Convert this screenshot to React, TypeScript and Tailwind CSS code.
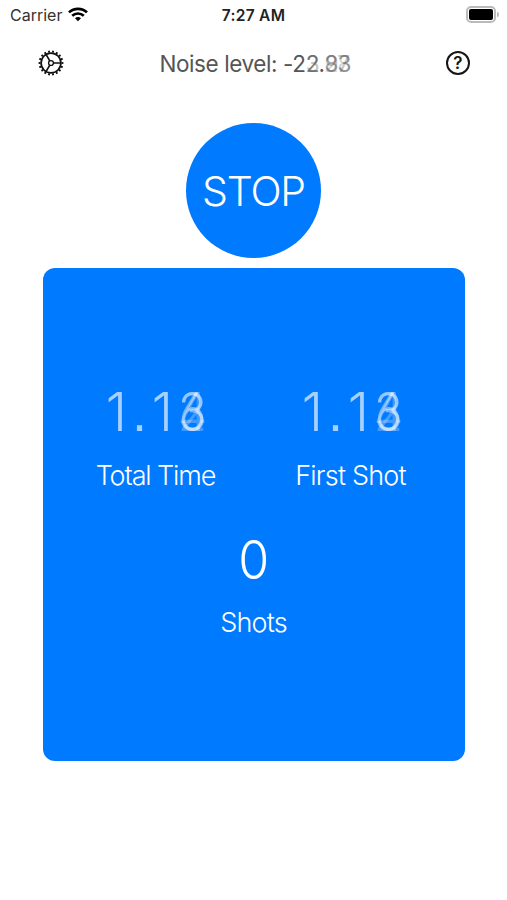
const BlendedDigits = ({ layers }: { layers: string[] }) => {
  return (
    <span className="relative block w-[29px] h-[56px] [font-feature-settings:'cv03','cv04']">
      {layers.map((digit, i) => (
        <span
          key={digit}
          className={`absolute inset-0 flex justify-center scale-x-[0.87] ${i < 2 ? "opacity-45" : "opacity-25"}`}
        >
          {digit}
        </span>
      ))}
    </span>
  );
};

const Timer = ({ label, labelClass }: { label: string; labelClass: string }) => {
  return (
    <div className="flex flex-col items-center">
      <div className="flex h-[56px] pr-[3px] text-[54px] leading-[56px] font-light text-white">
        <span className="w-[31px] text-center opacity-65">1</span>
        <span className="w-[15px] text-center font-['Liberation_Sans'] opacity-65">.</span>
        <span className="w-[31px] text-center opacity-65">1</span>
        <BlendedDigits layers={["3", "6", "2", "4"]} />
      </div>
      <span className={`mt-[20px] h-[32px] text-[27px] leading-[32px] font-light whitespace-nowrap text-white ${labelClass}`}>
        {label}
      </span>
    </div>
  );
};

const WifiIcon = () => {
  return (
    <svg className="w-[20px] h-[15px] -mt-[2px]" viewBox="0 0 20 15" fill="none" stroke="black" strokeWidth="2.7">
      <path d="M1 5.4C6 .6 14 .6 19 5.4" />
      <path d="M4.2 8.8c3.3-3.1 8.3-3.1 11.6 0" />
      <path d="M10 14.2l-3-3c1.7-1.5 4.3-1.5 6 0z" fill="black" stroke="none" />
    </svg>
  );
};

const teeth = Array.from({ length: 18 }, (_, i) => i * 20);

const GearIcon = () => {
  return (
    <svg className="w-[26px] h-[26px]" viewBox="-13 -13 26 26" fill="none" stroke="#111" strokeWidth="1.7">
      <circle r="9.9" />
      <circle r="2.4" strokeWidth="1.4" />
      <path d="M2.4 0H10M-1.2-2.1L-5-8.6M-1.2 2.1L-5 8.6" />
      {teeth.map((angle) => (
        <path key={angle} d="M10.5 0H12.4" strokeWidth="1.9" transform={`rotate(${angle})`} />
      ))}
    </svg>
  );
};

const HelpIcon = () => {
  return (
    <span className="flex w-[24px] h-[24px] items-center justify-center rounded-full border-2 border-[#151515] text-[17px] leading-none font-semibold text-[#151515]">
      ?
    </span>
  );
};

const StatusBar = () => {
  return (
    <div className="grid grid-cols-3 items-center h-[30px] pl-[10px] pr-[8px] text-black">
      <div className="flex items-center gap-[6px]">
        <span className="text-[16px] text-[#333]">Carrier</span>
        <WifiIcon />
      </div>
      <span className="pt-px pr-[2px] text-center text-[15.5px] font-semibold tracking-[0.3px] text-[#222] whitespace-nowrap">7:27 AM</span>
      <div className="flex items-center justify-end gap-px -mt-[2px]">
        <div className="w-[30px] h-[17px] rounded-[5px] border-2 border-[#bbb] p-px">
          <div className="h-full rounded-[2px] bg-black" />
        </div>
        <div className="w-[2px] h-[5px] rounded-r-full bg-[#bbb]" />
      </div>
    </div>
  );
};

export default function App() {
  return (
    <div className="h-[900px] w-[507px] overflow-hidden bg-white font-['Inter','Liberation_Sans',sans-serif]">
      <StatusBar />
      <div className="flex items-center justify-between h-[66px] pl-[38px] pr-[37px]">
        <GearIcon />
        <div className="flex pt-px text-[22.5px] leading-[30px] text-[#555] whitespace-pre">
          <span className="tracking-[-0.4px]">Noise level: -2</span>
          <span className="relative tracking-[-0.8px]">
            <span className="opacity-75">2</span>
            <span className="absolute left-0 top-0 opacity-35">3</span>
          </span>
          <span className="tracking-[-0.5px]">.</span>
          <span className="relative tracking-[-0.9px]">
            <span className="opacity-50">83</span>
            <span className="absolute left-0 top-0 opacity-35">97</span>
            <span className="absolute left-0 top-0 opacity-25">28</span>
          </span>
        </div>
        <HelpIcon />
      </div>
      <button className="mx-auto mt-[27px] flex w-[135px] h-[135px] items-center justify-center rounded-full bg-[#007aff] pt-[2px] text-[41px] font-light tracking-[-1.2px] text-white">
        STOP
      </button>
      <div className="mx-auto mt-[10px] w-[422px] h-[493px] rounded-[12px] bg-[#007aff] pt-[116px]">
        <div className="grid grid-cols-[196px_196px] justify-center">
          <Timer label="Total Time" labelClass="tracking-[-1.1px]" />
          <Timer label="First Shot" labelClass="tracking-[-0.8px] pr-[2px]" />
        </div>
        <div className="mt-[40px] flex flex-col items-center text-white">
          <span className="h-[56px] text-[54px] leading-[56px] font-light scale-x-[0.93]">0</span>
          <span className="mt-[19px] text-[27px] leading-[32px] font-light tracking-[-0.8px]">Shots</span>
        </div>
      </div>
    </div>
  );
}
